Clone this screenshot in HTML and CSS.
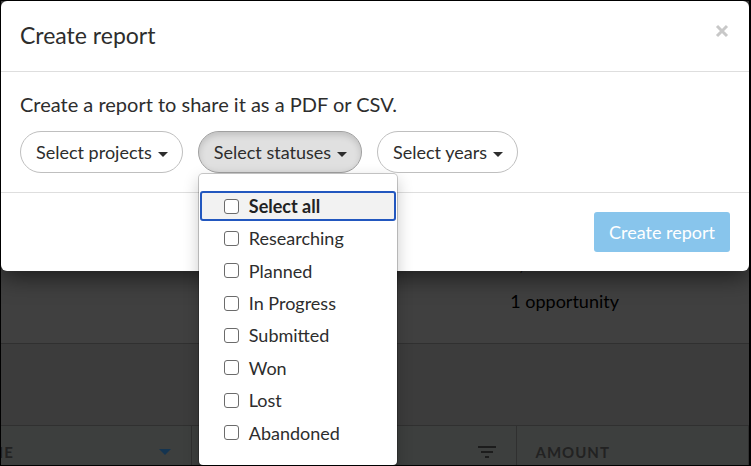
FILE: index.html
```html
<!DOCTYPE html>
<html lang="en">
<head>
    <meta charset="UTF-8">
    <meta name="viewport" content="width=device-width, initial-scale=1.0">
    <title>Create report</title>
    <link rel="stylesheet" href="styles.css">
</head>
<body>
    <div class="page">
        <div class="summary">
            <div class="total">
                <p class="amount">1,000</p>
                <p>1 opportunity</p>
            </div>
        </div>
        <div class="toolbar"></div>
        <table class="grid">
            <thead>
                <tr>
                    <th class="col-name">
                        <div class="th-inner">
                            <span>NAME</span>
                            <svg class="sort" width="12" height="6" viewBox="0 0 12 6"><path d="M0 0h12L6 6z"/></svg>
                        </div>
                    </th>
                    <th class="col-status">
                        <div class="th-inner">
                            <span></span>
                            <svg class="filter" width="18" height="12" viewBox="0 0 18 12"><path d="M0 1h18M3 6h12M7 11h4"/></svg>
                        </div>
                    </th>
                    <th class="col-amount">
                        <div class="th-inner"><span>AMOUNT</span></div>
                    </th>
                </tr>
            </thead>
        </table>
    </div>

    <div class="backdrop">
        <div class="modal" role="dialog" aria-labelledby="modal-title">
            <header class="modal-header">
                <h1 id="modal-title">Create report</h1>
                <button type="button" class="close" aria-label="Close">
                    <svg width="14" height="14" viewBox="0 0 14 14"><path d="M2 2l10 10M12 2L2 12"/></svg>
                </button>
            </header>
            <div class="modal-body">
                <p>Create a report to share it as a PDF or CSV.</p>
                <div class="filters">
                    <div class="dropdown">
                        <button type="button" class="toggle">Select projects <span class="caret"></span></button>
                    </div>
                    <div class="dropdown">
                        <button type="button" class="toggle open" aria-expanded="true">Select statuses <span class="caret"></span></button>
                        <div class="menu">
                            <label class="option all"><input type="checkbox"> Select all</label>
                            <div class="options">
                                <label class="option"><input type="checkbox"> Researching</label>
                                <label class="option"><input type="checkbox"> Planned</label>
                                <label class="option"><input type="checkbox"> In Progress</label>
                                <label class="option"><input type="checkbox"> Submitted</label>
                                <label class="option"><input type="checkbox"> Won</label>
                                <label class="option"><input type="checkbox"> Lost</label>
                                <label class="option"><input type="checkbox"> Abandoned</label>
                            </div>
                        </div>
                    </div>
                    <div class="dropdown">
                        <button type="button" class="toggle">Select years <span class="caret"></span></button>
                    </div>
                </div>
            </div>
            <footer class="modal-footer">
                <button type="button" class="submit">Create report</button>
            </footer>
        </div>
    </div>
</body>
</html>
```

FILE: styles.css
```css
* {
    box-sizing: border-box;
}

body {
    margin: 0;
    height: 100vh;
    overflow: hidden;
    position: relative;
    border: 1px solid #000;
    border-right-width: 2px;
    font-family: Lato, "Liberation Sans", sans-serif;
    font-size: 18px;
    color: #2d2d2d;
    background: #3c3c3c;
}

h1, p {
    margin: 0;
}

button {
    font-family: inherit;
    font-size: 18px;
    cursor: pointer;
}

/* page behind the dialog */
.page {
    height: 100%;
    display: flex;
    flex-direction: column;
}

.summary {
    height: 343px;
    flex-shrink: 0;
    display: flex;
    justify-content: flex-end;
    align-items: flex-end;
    padding: 0 130px 28px 0;
    line-height: 28px;
    color: #000;
    background: #404040;
    border-bottom: 1px solid #303030;
}

.amount {
    margin-bottom: 8px;
    font-size: 16px;
}

.toolbar {
    height: 81px;
    flex-shrink: 0;
}

.grid {
    width: 100%;
    table-layout: fixed;
    border-collapse: collapse;
    background: #3d3f3e;
}

.grid th {
    height: 52px;
    padding: 0;
    border-top: 1px solid #303030;
    border-right: 1px solid #303030;
    font-size: 15px;
    font-weight: 700;
    letter-spacing: 1px;
    color: #222;
}

.th-inner {
    display: flex;
    justify-content: space-between;
    align-items: center;
    padding: 0 20px 0 19px;
}

.grid .col-name {
    width: 190px;
}

.col-name .th-inner {
    padding-left: 0;
    margin-left: -36px;
}

.grid .col-status {
    width: 325px;
}

.sort {
    fill: #143450;
}

.filter {
    fill: none;
    stroke: #1c1c1c;
    stroke-width: 2;
}

/* dialog */
.backdrop {
    position: absolute;
    top: 0;
    left: 0;
    right: 0;
}

.modal {
    background: #fff;
    border-radius: 6px;
    box-shadow: 0 5px 24px rgba(0, 0, 0, 0.6);
}

.modal-header {
    display: flex;
    justify-content: space-between;
    align-items: center;
    height: 71px;
    padding: 0 20px 2px 19px;
    border-bottom: 1px solid #dedede;
}

.modal-header h1 {
    font-size: 23px;
    font-weight: 400;
}

.close {
    padding: 0;
    margin-bottom: 8px;
    border: none;
    background: none;
    line-height: 0;
}

.close path {
    stroke: #c8c8c8;
    stroke-width: 3;
}

.modal-body {
    padding: 19px;
    border-bottom: 1px solid #dedede;
}

.modal-body p {
    font-size: 20px;
    line-height: 26px;
    margin-bottom: 14px;
}

.filters {
    display: flex;
    gap: 15px;
}

.dropdown {
    position: relative;
}

.toggle {
    display: flex;
    align-items: center;
    height: 42px;
    padding: 0 14px 0 15px;
    border: 1px solid #bfbfbf;
    border-radius: 21px;
    background: #fff;
    color: #2d2d2d;
}

.toggle.open {
    background: #e0e0e0;
    border-color: #a0a0a0;
    box-shadow: inset 0 3px 6px rgba(0, 0, 0, 0.15);
}

.caret {
    margin: 4px 0 0 6px;
    border-top: 5px solid #2d2d2d;
    border-left: 5px solid transparent;
    border-right: 5px solid transparent;
}

.menu {
    position: absolute;
    top: 100%;
    left: 0;
    width: 200px;
    padding: 17px 1px 16px;
    background: #fff;
    background-clip: padding-box;
    border: 1px solid rgba(0, 0, 0, 0.2);
    border-radius: 5px;
    box-shadow: 0 6px 16px rgba(0, 0, 0, 0.2);
}

.options {
    display: grid;
    grid-auto-rows: 1fr;
    height: 227px;
    margin-top: 1px;
    padding: 0 2px;
}

.option {
    display: flex;
    align-items: center;
    gap: 10px;
    padding-left: 22px;
}

.option input {
    appearance: none;
    width: 15px;
    height: 15px;
    margin: 0;
    border: 1px solid #6b6b6b;
    border-radius: 3px;
    background: #fff;
}

.option.all {
    height: 30px;
    border: 2px solid #2257bf;
    border-radius: 3px;
    background: #f2f2f2;
    color: #222;
    font-weight: 700;
}

.modal-footer {
    display: flex;
    justify-content: flex-end;
    padding: 19px;
}

.submit {
    height: 40px;
    padding: 0 15px;
    border: none;
    border-radius: 3px;
    background: #88c5ec;
    color: #fff;
}
```
